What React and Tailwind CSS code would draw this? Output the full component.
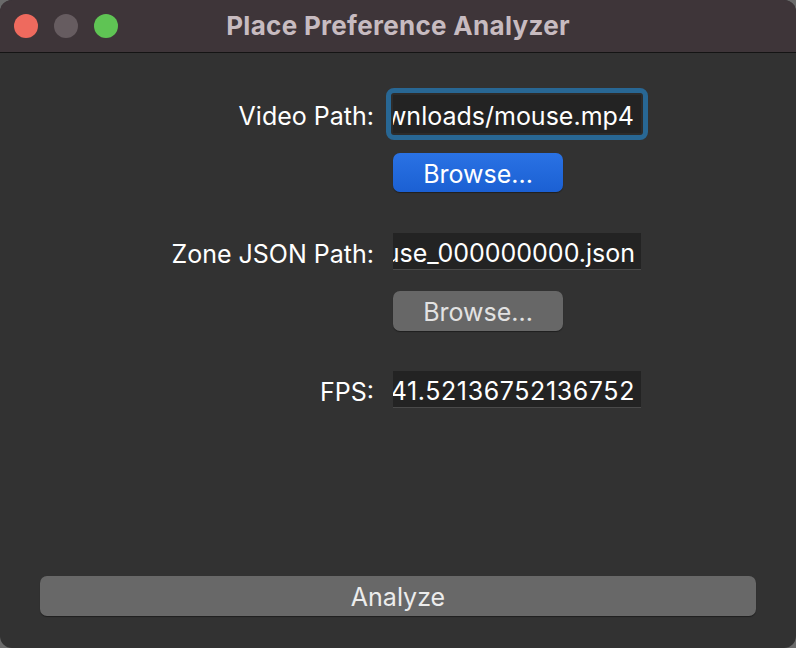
export default function App() {
  const font = { fontFamily: 'Inter, "Noto Sans", "Liberation Sans", sans-serif' };
  return (
    <div className="w-[796px] h-[648px] bg-[#6a6a6a] overflow-hidden" style={font}>
      <div className="w-full h-full rounded-[12px] overflow-hidden bg-[#323232] flex flex-col">
        <div className="h-[53px] bg-[#3e3539] border-b border-[#141414] flex items-center relative shrink-0">
          <div className="flex items-center gap-[16px] pl-[14px]">
            <div className="w-[24px] h-[24px] rounded-full bg-[#ee6a5e]" />
            <div className="w-[24px] h-[24px] rounded-full bg-[#665c60]" />
            <div className="w-[24px] h-[24px] rounded-full bg-[#5fc454]" />
          </div>
          <div className="absolute inset-0 flex items-center justify-center pb-[2px] text-[26px] font-bold text-[#c7bbc0] tracking-[0.3px]">
            Place Preference Analyzer
          </div>
        </div>

        <div className="flex-1 flex flex-col text-white text-[25px] leading-[30px]">
          <div className="grid grid-cols-[374px_248px] gap-x-[19px] pt-[42px] items-center">
            <div className="text-right h-[38px] pt-[5px] leading-[33px]">Video Path:</div>
            <div className="relative">
              <div className="-m-[7px] border-[5px] border-[#286794] rounded-[8px] p-[2px] bg-[#2c2c2c]">
                <div className="h-[38px] bg-[#232323] flex items-center justify-end overflow-hidden pr-[7px] pt-[4px] whitespace-nowrap">
                  ownloads/mouse.mp4
                </div>
              </div>
            </div>

            <div />
            <div className="mt-[20px]">
              <div className="w-[170px] h-[39px] rounded-[7px] bg-gradient-to-b from-[#2a72e4] to-[#1b60d3] flex items-center justify-center pt-[2px] shadow-[0_1px_1px_rgba(0,0,0,0.4)]">
                Browse...
              </div>
            </div>

            <div className="text-right mt-[41px] h-[37px] pt-[5px] leading-[32px]">Zone JSON Path:</div>
            <div className="mt-[41px] h-[37px] bg-[#232323] border-b border-[#4a4a4a] flex items-center justify-end overflow-hidden pr-[6px] pt-[4px] whitespace-nowrap">
              ouse_000000000.json
            </div>

            <div />
            <div className="mt-[21px]">
              <div className="w-[170px] h-[40px] rounded-[7px] bg-[#676767] text-[#e2e2e2] flex items-center justify-center pt-[2px] shadow-[0_1px_1px_rgba(0,0,0,0.4)]">
                Browse...
              </div>
            </div>

            <div className="text-right mt-[40px] h-[37px] pt-[5px] leading-[32px]">FPS:</div>
            <div className="mt-[40px] h-[37px] bg-[#232323] border-b border-[#4a4a4a] flex items-center justify-end overflow-hidden pr-[6px] pt-[4px] whitespace-nowrap tracking-[0.6px]">
              41.52136752136752
            </div>
          </div>

          <div className="mt-auto mb-[32px] mx-[40px] h-[40px] rounded-[7px] bg-[#686868] text-[#ececec] flex items-center justify-center pt-[2px] shadow-[0_1px_1px_rgba(0,0,0,0.4)]">
            Analyze
          </div>
        </div>
      </div>
    </div>
  );
}
